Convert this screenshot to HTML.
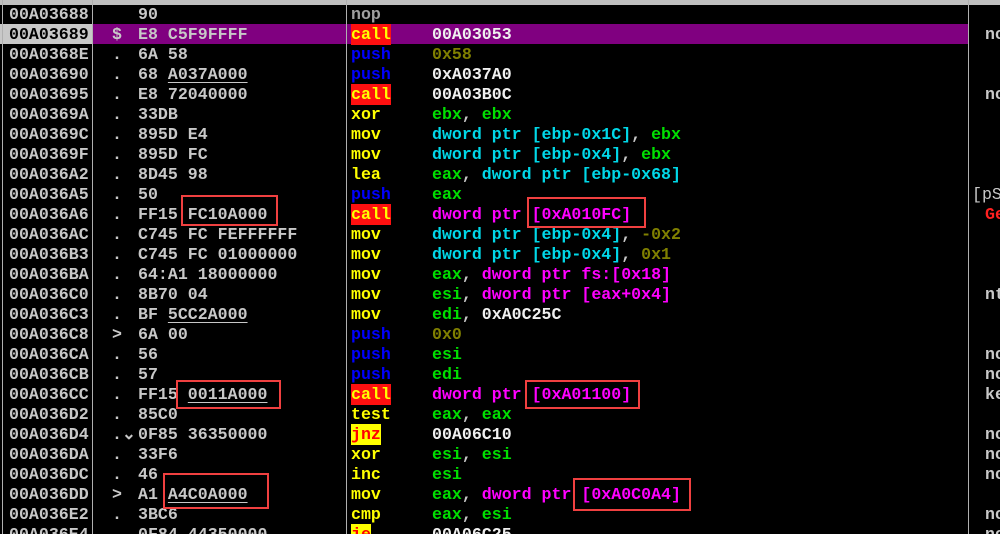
<!DOCTYPE html>
<html><head><meta charset="utf-8"><style>
html,body{margin:0;width:1000px;height:534px;overflow:hidden}
body{background:#000;position:relative;font-family:"Liberation Mono",monospace;font-size:16.6px;font-weight:bold;color:#c8c8c8}
.r{position:absolute;left:0;width:1000px;height:20px;line-height:21px;white-space:pre}
.r span{position:absolute;top:0}
.a{left:9px}.m{left:112px}.h{left:138px}.i{left:351px}.o{left:432px}.c{left:985px}
.p{color:#0000ff}.y{color:#ffff00}.g{color:#00e000}.cy{color:#00d8e8}.mg{color:#ff00ff}.ol{color:#808000}.w{color:#f0f0f0}
.call{background:#ff1010;color:#ffff00}
.jnz{background:#ffff00;color:#ff0000}
u{text-decoration:underline;text-underline-offset:3px}
.box{position:absolute;border:2px solid #f04040;box-sizing:border-box}
.vl{position:absolute;top:0;width:1px;height:534px;background:#b0b0b0}
</style></head><body>
<div style="position:absolute;left:0;top:0;width:1000px;height:5px;background:#c0c0c0"></div>
<div style="position:absolute;left:0;top:24px;width:968px;height:20px;background:#800080"></div>
<div style="position:absolute;left:0;top:24px;width:92px;height:20px;background:#c8c8c8"></div>
<div class="vl" style="left:2px"></div>
<div class="vl" style="left:92px"></div>
<div class="vl" style="left:346px"></div>
<div class="vl" style="left:968px"></div>

<div class="r" style="top:4px"><span class="a">00A03688</span><span class="h">90</span><span class="i" style="color:#a0a0a0">nop</span></div>
<div class="r" style="top:24px"><span class="a" style="color:#000">00A03689</span><span class="m">$</span><span class="h">E8 C5F9FFFF</span><span class="i call">call</span><span class="o w">00A03053</span><span class="c">no</span></div>
<div class="r" style="top:44px"><span class="a">00A0368E</span><span class="m">.</span><span class="h">6A 58</span><span class="i p">push</span><span class="o ol">0x58</span></div>
<div class="r" style="top:64px"><span class="a">00A03690</span><span class="m">.</span><span class="h">68 <u>A037A000</u></span><span class="i p">push</span><span class="o w">0xA037A0</span></div>
<div class="r" style="top:84px"><span class="a">00A03695</span><span class="m">.</span><span class="h">E8 72040000</span><span class="i call">call</span><span class="o w">00A03B0C</span><span class="c">no</span></div>
<div class="r" style="top:104px"><span class="a">00A0369A</span><span class="m">.</span><span class="h">33DB</span><span class="i y">xor</span><span class="o"><b class="g">ebx</b>, <b class="g">ebx</b></span></div>
<div class="r" style="top:124px"><span class="a">00A0369C</span><span class="m">.</span><span class="h">895D E4</span><span class="i y">mov</span><span class="o"><b class="cy">dword ptr [ebp-0x1C]</b>, <b class="g">ebx</b></span></div>
<div class="r" style="top:144px"><span class="a">00A0369F</span><span class="m">.</span><span class="h">895D FC</span><span class="i y">mov</span><span class="o"><b class="cy">dword ptr [ebp-0x4]</b>, <b class="g">ebx</b></span></div>
<div class="r" style="top:164px"><span class="a">00A036A2</span><span class="m">.</span><span class="h">8D45 98</span><span class="i y">lea</span><span class="o"><b class="g">eax</b>, <b class="cy">dword ptr [ebp-0x68]</b></span></div>
<div class="r" style="top:184px"><span class="a">00A036A5</span><span class="m">.</span><span class="h">50</span><span class="i p">push</span><span class="o g">eax</span><span class="c" style="left:972px;font-weight:normal">[pS</span></div>
<div class="r" style="top:204px"><span class="a">00A036A6</span><span class="m">.</span><span class="h">FF15 FC10A000</span><span class="i call">call</span><span class="o mg">dword ptr [0xA010FC]</span><span class="c" style="color:#ff2020">Ge</span></div>
<div class="r" style="top:224px"><span class="a">00A036AC</span><span class="m">.</span><span class="h">C745 FC FEFFFFFF</span><span class="i y">mov</span><span class="o"><b class="cy">dword ptr [ebp-0x4]</b>, <b class="ol">-0x2</b></span></div>
<div class="r" style="top:244px"><span class="a">00A036B3</span><span class="m">.</span><span class="h">C745 FC 01000000</span><span class="i y">mov</span><span class="o"><b class="cy">dword ptr [ebp-0x4]</b>, <b class="ol">0x1</b></span></div>
<div class="r" style="top:264px"><span class="a">00A036BA</span><span class="m">.</span><span class="h">64:A1 18000000</span><span class="i y">mov</span><span class="o"><b class="g">eax</b>, <b class="mg">dword ptr fs:[0x18]</b></span></div>
<div class="r" style="top:284px"><span class="a">00A036C0</span><span class="m">.</span><span class="h">8B70 04</span><span class="i y">mov</span><span class="o"><b class="g">esi</b>, <b class="mg">dword ptr [eax+0x4]</b></span><span class="c">nt</span></div>
<div class="r" style="top:304px"><span class="a">00A036C3</span><span class="m">.</span><span class="h">BF <u>5CC2A000</u></span><span class="i y">mov</span><span class="o"><b class="g">edi</b>, <b class="w">0xA0C25C</b></span></div>
<div class="r" style="top:324px"><span class="a">00A036C8</span><span class="m">&gt;</span><span class="h">6A 00</span><span class="i p">push</span><span class="o ol">0x0</span></div>
<div class="r" style="top:344px"><span class="a">00A036CA</span><span class="m">.</span><span class="h">56</span><span class="i p">push</span><span class="o g">esi</span><span class="c">no</span></div>
<div class="r" style="top:364px"><span class="a">00A036CB</span><span class="m">.</span><span class="h">57</span><span class="i p">push</span><span class="o g">edi</span><span class="c">no</span></div>
<div class="r" style="top:384px"><span class="a">00A036CC</span><span class="m">.</span><span class="h">FF15 <u>0011A000</u></span><span class="i call">call</span><span class="o mg">dword ptr [0xA01100]</span><span class="c">ke</span></div>
<div class="r" style="top:404px"><span class="a">00A036D2</span><span class="m">.</span><span class="h">85C0</span><span class="i y">test</span><span class="o"><b class="g">eax</b>, <b class="g">eax</b></span></div>
<div class="r" style="top:424px"><span class="a">00A036D4</span><span class="m">.⌄</span><span class="h">0F85 36350000</span><span class="i jnz">jnz</span><span class="o w">00A06C10</span><span class="c">no</span></div>
<div class="r" style="top:444px"><span class="a">00A036DA</span><span class="m">.</span><span class="h">33F6</span><span class="i y">xor</span><span class="o"><b class="g">esi</b>, <b class="g">esi</b></span><span class="c">no</span></div>
<div class="r" style="top:464px"><span class="a">00A036DC</span><span class="m">.</span><span class="h">46</span><span class="i y">inc</span><span class="o g">esi</span><span class="c">no</span></div>
<div class="r" style="top:484px"><span class="a">00A036DD</span><span class="m">&gt;</span><span class="h">A1 <u>A4C0A000</u></span><span class="i y">mov</span><span class="o"><b class="g">eax</b>, <b class="mg">dword ptr [0xA0C0A4]</b></span></div>
<div class="r" style="top:504px"><span class="a">00A036E2</span><span class="m">.</span><span class="h">3BC6</span><span class="i y">cmp</span><span class="o"><b class="g">eax</b>, <b class="g">esi</b></span><span class="c">no</span></div>
<div class="r" style="top:524px"><span class="a">00A036E4</span><span class="m">.</span><span class="h">0F84 44350000</span><span class="i jnz">je</span><span class="o w">00A06C25</span><span class="c">no</span></div>

<div class="box" style="left:181px;top:195px;width:97px;height:31px"></div>
<div class="box" style="left:527px;top:197px;width:119px;height:31px"></div>
<div class="box" style="left:176px;top:380px;width:105px;height:29px"></div>
<div class="box" style="left:525px;top:380px;width:115px;height:29px"></div>
<div class="box" style="left:163px;top:473px;width:106px;height:36px"></div>
<div class="box" style="left:573px;top:478px;width:118px;height:33px"></div>
</body></html>
